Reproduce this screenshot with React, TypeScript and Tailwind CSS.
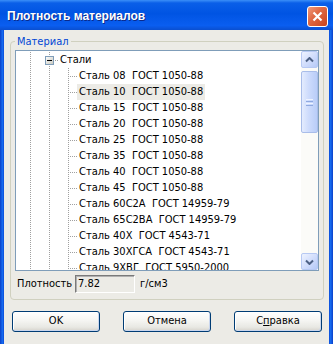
import React from "react";

const steels = [
  "Сталь 08  ГОСТ 1050-88",
  "Сталь 10  ГОСТ 1050-88",
  "Сталь 15  ГОСТ 1050-88",
  "Сталь 20  ГОСТ 1050-88",
  "Сталь 25  ГОСТ 1050-88",
  "Сталь 35  ГОСТ 1050-88",
  "Сталь 40  ГОСТ 1050-88",
  "Сталь 45  ГОСТ 1050-88",
  "Сталь 60С2А  ГОСТ 14959-79",
  "Сталь 65С2ВА  ГОСТ 14959-79",
  "Сталь 40Х  ГОСТ 4543-71",
  "Сталь 30ХГСА  ГОСТ 4543-71",
  "Сталь 9ХВГ  ГОСТ 5950-2000",
];

const dot = { stroke: "#a0a0a0", strokeWidth: 1, strokeDasharray: "1 1" };

// tree guide lines for a child row (level 2)
function ChildLines() {
  return (
    <svg width="61" height="16" className="shrink-0">
      <line x1="14.5" y1="0" x2="14.5" y2="16" {...dot} />
      <line x1="33.5" y1="0" x2="33.5" y2="16" {...dot} />
      <line x1="52.5" y1="0" x2="52.5" y2="16" {...dot} />
      <line x1="54" y1="8.5" x2="61" y2="8.5" {...dot} />
    </svg>
  );
}

function GroupLines() {
  return (
    <svg width="42" height="16" className="shrink-0">
      <line x1="14.5" y1="0" x2="14.5" y2="16" {...dot} />
      <line x1="33.5" y1="0" x2="33.5" y2="16" {...dot} />
      <line x1="39" y1="8.5" x2="42" y2="8.5" {...dot} />
      <defs>
        <linearGradient id="exp" x1="0" y1="0" x2="1" y2="1">
          <stop offset="0" stopColor="#ffffff" />
          <stop offset="1" stopColor="#c6c6bc" />
        </linearGradient>
      </defs>
      <rect x="29.5" y="4.5" width="8" height="8" fill="url(#exp)" stroke="#7f9db9" />
      <line x1="31" y1="8.5" x2="36" y2="8.5" stroke="#000" />
    </svg>
  );
}

function ScrollButton({ down }: { down?: boolean }) {
  return (
    <div className="h-[17px] w-[17px] rounded-[2px] border border-[#b7c9f3] bg-[linear-gradient(135deg,#eef3ff_0%,#d2defc_50%,#b5c9f7_100%)] flex items-center justify-center">
      <svg width="9" height="6" viewBox="0 0 9 6">
        <path
          d={down ? "M1 1.5 L4.5 5 L8 1.5" : "M1 4.5 L4.5 1 L8 4.5"}
          fill="none"
          stroke="#4d6185"
          strokeWidth="2"
        />
      </svg>
    </div>
  );
}

function XPButton({ children }: { children: React.ReactNode }) {
  return (
    <div className="w-[88px] h-[21px] rounded-[3px] border border-[#003c74] bg-[linear-gradient(180deg,#ffffff_0%,#f5f5f2_45%,#e8e8e3_80%,#d6d3cc_100%)] shadow-[inset_-1px_-1px_0_#c9d6ee,inset_1px_1px_0_#fff] flex items-center justify-center text-black">
      {children}
    </div>
  );
}

export default function App() {
  return (
    <div className="w-[333px] h-[344px] overflow-hidden flex flex-col bg-[#0a4fd8] [font-family:'DejaVu_Sans_Condensed','Liberation_Sans',sans-serif] text-[11px]">
      {/* title bar */}
      <div className="h-[30px] shrink-0 flex items-start justify-between bg-[linear-gradient(180deg,#3b8ff8_0%,#0a5fe8_10%,#0054e3_45%,#0a5ef0_85%,#0a4fd0_100%)]">
        <div className="mt-[9px] ml-[7px] leading-[14px] text-[12px] font-bold text-white [font-family:'Liberation_Sans',sans-serif] [text-shadow:1px_1px_0_#0b2a8a]">
          Плотность материалов
        </div>
        <div className="mt-[6px] mr-[5px] w-[21px] h-[21px] rounded-[3px] border border-white bg-[linear-gradient(135deg,#f09a7c_0%,#e06a45_40%,#c9431c_100%)] flex items-center justify-center">
          <svg width="11" height="11" viewBox="0 0 11 11">
            <path d="M1.5 1.5 L9.5 9.5 M9.5 1.5 L1.5 9.5" stroke="#fff" strokeWidth="2.2" />
          </svg>
        </div>
      </div>

      <div className="flex-1 flex">
        <div className="w-[4px] bg-[linear-gradient(90deg,#0a3fc8,#166bf0_60%,#0a4ad8)]" />
        <div className="flex-1 bg-[#ecebe6] text-black">
          <fieldset className="mt-[5px] ml-[6px] mr-[5px] px-[4px] pt-[2px] pb-[6px] border border-[#d0d0bf] rounded-[4px]">
            <legend className="ml-0 px-[2px] leading-[13px] text-[#0046d5]">Материал</legend>

            {/* tree view */}
            <div className="h-[221px] border border-[#7f9db9] bg-white flex overflow-hidden">
              <div className="flex-1 pt-px overflow-hidden">
                <div className="flex h-[16px] items-center">
                  <GroupLines />
                  <span className="px-[2px] leading-[16px] whitespace-pre">Стали</span>
                </div>
                {steels.map((s, i) => (
                  <div key={s} className="flex h-[16px] items-center">
                    <ChildLines />
                    <span
                      className={
                        "px-[2px] leading-[16px] whitespace-pre" +
                        (i === 1 ? " bg-[#ecebe6]" : "")
                      }
                    >
                      {s}
                    </span>
                  </div>
                ))}
              </div>
              <div className="w-[17px] flex flex-col bg-[#fbfbf8]">
                <ScrollButton />
                <div className="flex-1 pt-[3px]">
                  <div className="h-[62px] rounded-[2px] border border-[#a9bde9] bg-[linear-gradient(90deg,#e4ecfe_0%,#cddbfc_45%,#b9cdf8_100%)] flex flex-col items-center justify-center gap-px">
                    <div className="w-[7px] h-px bg-[#eef3ff]" />
                    <div className="w-[7px] h-px bg-[#8fa9e0]" />
                    <div className="w-[7px] h-px bg-[#eef3ff]" />
                    <div className="w-[7px] h-px bg-[#8fa9e0]" />
                  </div>
                </div>
                <ScrollButton down />
              </div>
            </div>

            <div className="mt-[4px] h-[18px] flex items-center">
              <span className="w-[60px] pl-[2px]">Плотность</span>
              <div className="w-[60px] h-[18px] border border-t-[#7a7a7a] border-l-[#7a7a7a] border-r-white border-b-white shadow-[inset_1px_1px_0_#b0b0b0] bg-[#ecebe6] pl-[2px] leading-[16px]">
                7.82
              </div>
              <span className="ml-[5px]">г/см3</span>
            </div>
          </fieldset>

          <div className="mt-[11px] ml-[8px] flex gap-[23px]">
            <XPButton>OK</XPButton>
            <XPButton>Отмена</XPButton>
            <XPButton>
              <span>
                С<span className="underline">п</span>равка
              </span>
            </XPButton>
          </div>
        </div>
        <div className="w-[4px] bg-[linear-gradient(90deg,#0a4ad8,#166bf0_40%,#0a3fc8)]" />
      </div>
    </div>
  );
}
